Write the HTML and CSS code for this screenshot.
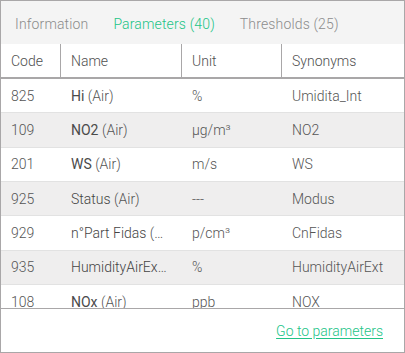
FILE: index.html
```html
<!DOCTYPE html>
<html>
<head>
<meta charset="utf-8">
<link rel="stylesheet" href="styles.css">
</head>
<body>
<div class="card">
  <div class="tabs">
    <span class="tab">Information</span>
    <span class="tab active">Parameters (40)</span>
    <span class="tab">Thresholds (25)</span>
  </div>
  <div class="row head">
    <div class="cell">Code</div>
    <div class="cell">Name</div>
    <div class="cell">Unit</div>
    <div class="cell last">Synonyms</div>
  </div>
  <div class="body">
    <div class="row">
      <div class="cell">825</div>
      <div class="cell"><span class="strong">Hi</span> (Air)</div>
      <div class="cell">%</div>
      <div class="cell">Umidita_Int</div>
    </div>
    <div class="row alt">
      <div class="cell">109</div>
      <div class="cell"><span class="strong">NO2</span> (Air)</div>
      <div class="cell">µg/m³</div>
      <div class="cell">NO2</div>
    </div>
    <div class="row">
      <div class="cell">201</div>
      <div class="cell"><span class="strong">WS</span> (Air)</div>
      <div class="cell">m/s</div>
      <div class="cell">WS</div>
    </div>
    <div class="row alt">
      <div class="cell">925</div>
      <div class="cell"><span class="mid">Status</span> (Air)</div>
      <div class="cell">---</div>
      <div class="cell">Modus</div>
    </div>
    <div class="row">
      <div class="cell">929</div>
      <div class="cell"><span class="mid">n°Part Fidas</span> (Air)</div>
      <div class="cell">p/cm³</div>
      <div class="cell">CnFidas</div>
    </div>
    <div class="row alt">
      <div class="cell">935</div>
      <div class="cell"><span class="mid">HumidityAirExt</span> (Air)</div>
      <div class="cell">%</div>
      <div class="cell">HumidityAirExt</div>
    </div>
    <div class="row">
      <div class="cell">108</div>
      <div class="cell"><span class="strong">NOx</span> (Air)</div>
      <div class="cell">ppb</div>
      <div class="cell">NOX</div>
    </div>
  </div>
  <div class="footer">
    <a class="link" href="#">Go to parameters</a>
  </div>
</div>
</body>
</html>
```
FILE: styles.css
```css
* { box-sizing: border-box; }
html, body { margin: 0; padding: 0; background: #fff; }
body {
  font-family: Roboto, "Liberation Sans", sans-serif;
  font-size: 14px;
  font-weight: 300;
  color: #5a5a5a;
}
.card {
  width: 405px;
  height: 353px;
  border: 1px solid #a9a7a8;
  display: flex;
  flex-direction: column;
  overflow: hidden;
}
.tabs {
  height: 43px;
  flex: none;
  background: #f4f4f4;
  display: flex;
  align-items: center;
  gap: 25px;
  padding-left: 14px;
  padding-top: 3px;
  letter-spacing: 0.15px;
}
.tab { color: #8c8c8c; }
.tab.active { color: #22c487; }
.row {
  display: grid;
  grid-template-columns: 60px 121px 100px 1fr;
  height: 34.33px;
  align-items: center;
  border-bottom: 1px solid #e2e2e2;
}
.row.alt { background: #efeeee; }
.row.head {
  height: 35px;
  flex: none;
  border-bottom: 2px solid #a9a7a8;
  align-items: stretch;
}
.head .cell {
  display: flex;
  align-items: center;
  border-right: 1px solid #a9a7a8;
  color: #4f4f4f;
}
.head .cell.last { border-right: none; }
.cell {
  padding-left: 10px;
  padding-right: 11px;
  white-space: nowrap;
  overflow: hidden;
  text-overflow: ellipsis;
  color: #555;
}
.strong { color: #4a4a4a; font-weight: 400; }
.mid { color: #444; }
.body {
  height: 229px;
  flex: none;
  overflow: hidden;
}
.footer {
  flex: 1;
  border-top: 1px solid #a9a7a8;
  display: flex;
  align-items: center;
  justify-content: flex-end;
  padding-right: 21px;
  padding-top: 1px;
}
.link {
  color: #22c487;
  text-decoration: underline;
  text-underline-offset: 2px;
}
```
